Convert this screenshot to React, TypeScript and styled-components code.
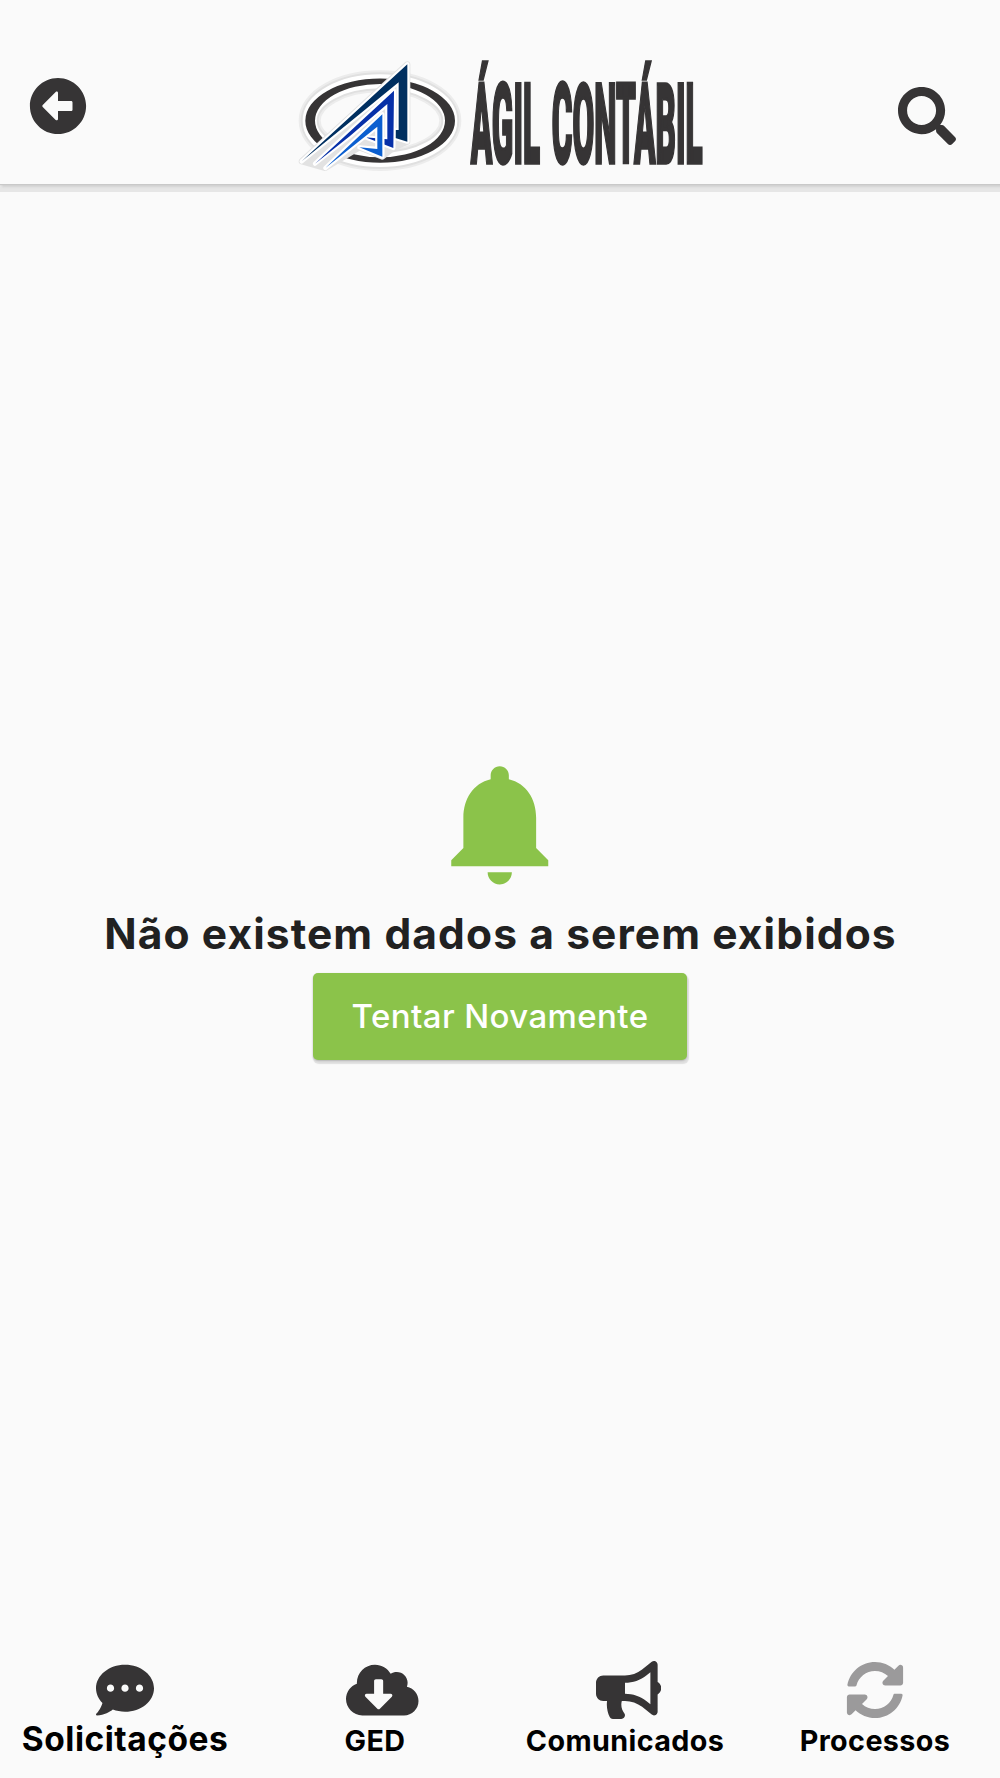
import React from "react";
import styled, { createGlobalStyle } from "styled-components";
import { FaArrowAltCircleLeft, FaSearch, FaCommentDots, FaCloudDownloadAlt, FaBullhorn, FaSyncAlt } from "react-icons/fa";

const GlobalStyle = createGlobalStyle`
  *, *::before, *::after { box-sizing: border-box; }
  body { margin: 0; background: #fafafa; font-family: Inter, "Liberation Sans", sans-serif; }
`;

const Screen = styled.div`
  display: flex;
  flex-direction: column;
  width: 1000px;
  height: 1778px;
  overflow: hidden;
  background: #fafafa;
`;

const Header = styled.header`
  display: flex;
  flex: none;
  align-items: flex-start;
  justify-content: space-between;
  height: 184px;
  padding: 30px 44px 0 29px;
  background: #fafafa;
  box-shadow: 0 1px 1px #c9c9c9, 2px 3px 2px #d2d2d2, 0 8px 0 #e6e6e6;
`;

const IconButton = styled.button<{ $top: number }>`
  display: flex;
  width: 58px;
  height: 58px;
  margin-top: ${(p) => p.$top}px;
  padding: 0;
  border: 0;
  background: none;
  color: #363435;
  font-size: 58px;
`;

const Logo = styled.svg`
  display: block;
  width: 420px;
  height: 167px;
  margin-left: 15px;
  overflow: visible;
  font-family: Roboto, "Liberation Sans", sans-serif;
  font-weight: 900;
`;

const Main = styled.main`
  display: flex;
  flex: 1;
  flex-direction: column;
  align-items: center;
  padding-top: 567px;
`;

const Bell = styled.svg`
  display: block;
  flex: none;
  width: 145.5px;
  height: 145.5px;
  fill: #8bc34a;
`;

const Message = styled.h1`
  margin: 12.5px 0 14px;
  padding-left: 1px;
  color: #212121;
  font-size: 42.5px;
  font-weight: 650;
  line-height: 50px;
  letter-spacing: 1.1px;
  white-space: nowrap;
`;

const RetryButton = styled.button`
  width: 374px;
  height: 87px;
  padding: 0 0 1px;
  border: 0;
  border-radius: 5px;
  background: #8bc34a;
  box-shadow: 0 1px 2px #b5b5b5, 1px 3px 1px 1px #e0e0e0;
  color: #fff;
  font-family: inherit;
  font-size: 33px;
  font-weight: 500;
  letter-spacing: 0.4px;
  white-space: nowrap;
`;

const NavBar = styled.nav`
  display: grid;
  flex: none;
  grid-template-columns: repeat(4, 250px);
  height: 117px;
`;

const NavItem = styled.a<{ $muted?: boolean }>`
  display: flex;
  flex-direction: column;
  align-items: center;
  color: ${(p) => (p.$muted ? "#9b9a9b" : "#363435")};
`;

const NavIcon = styled.span<{ $width: number }>`
  display: flex;
  width: 58px;
  height: 58px;
  overflow: visible;

  svg {
    flex: none;
    width: ${(p) => p.$width}px;
    height: 58px;
  }
`;

const NavLabel = styled.span<{ $large?: boolean }>`
  margin-top: ${(p) => (p.$large ? 0 : 2)}px;
  color: #000;
  font-size: ${(p) => (p.$large ? 33.5 : 28.7)}px;
  font-weight: 650;
  line-height: 40px;
  letter-spacing: ${(p) => (p.$large ? 0.5 : 0.4)}px;
  white-space: nowrap;
`;

const strokes = [
  { d: "M35 334 L352 43 V275 L316 264 V240 H326 V97 L180 216 Z", fill: "#002f60" },
  { d: "M75 341 L312 122 L310 294 L226 262 L292 268 V162 L180 258 Z", fill: "#0730a8" },
  { d: "M106 354 L277 193 V320 L208 292 L262 297 V230 Z", fill: "#0b5fd0" },
];

function BrandLogo() {
  return (
    <Logo viewBox="0 -60 1260 501" role="img" aria-label="Ágil Contábil">
      <g fill="none">
        <ellipse cx="270" cy="212" rx="211" ry="118" stroke="#ececec" strokeWidth="66" />
        <ellipse cx="270" cy="212" rx="211" ry="118" stroke="#e0e0e0" strokeWidth="54" />
        <ellipse cx="270" cy="212" rx="211" ry="118" stroke="#fff" strokeWidth="42" />
        <path fill="#363435" fillRule="evenodd" d="M46 212a224 126 0 1 0 449 0a224 126 0 1 0-449 0ZM75 212a195 110 0 1 1 390 0a195 110 0 1 1-390 0Z" />
      </g>
      <path d="M35 334L352 43V275L310 294L277 320L208 292L106 354Z" fill="#e2e2e2" stroke="#e2e2e2" strokeWidth="18" strokeLinejoin="round" />
      {strokes.map((s) => (
        <path key={s.fill} d={s.d} fill={s.fill} stroke="#fff" strokeWidth="13" strokeLinejoin="round" paintOrder="stroke" />
      ))}
      <g transform="translate(542 338) scale(0.2825 1)">
        <text
          fontSize="333"
          textLength="2464"
          wordSpacing="40"
          lengthAdjust="spacingAndGlyphs"
          fill="#363435"
          stroke="#363435"
          strokeWidth="2.5"
          vectorEffect="non-scaling-stroke"
        >
          ÁGIL CONTÁBIL
        </text>
      </g>
    </Logo>
  );
}

const items = [
  { label: "Solicitações", Icon: FaCommentDots, width: 58, large: true },
  { label: "GED", Icon: FaCloudDownloadAlt, width: 72.5 },
  { label: "Comunicados", Icon: FaBullhorn, width: 65.25 },
  { label: "Processos", Icon: FaSyncAlt, width: 58, muted: true },
];

export default function App() {
  return (
    <>
      <GlobalStyle />
      <Screen>
        <Header>
          <IconButton $top={47} aria-label="Voltar"><FaArrowAltCircleLeft /></IconButton>
          <BrandLogo />
          <IconButton $top={57} aria-label="Buscar"><FaSearch /></IconButton>
        </Header>
        <Main>
          <Bell viewBox="0 0 24 24">
            <path d="M12 22c1.1 0 2-.9 2-2h-4c0 1.1.89 2 2 2zm6-6v-5c0-3.07-1.64-5.64-4.5-6.32V4c0-.83-.67-1.5-1.5-1.5s-1.5.67-1.5 1.5v.68C7.63 5.36 6 7.92 6 11v5l-2 2v1h16v-1l-2-2z" />
          </Bell>
          <Message>Não existem dados a serem exibidos</Message>
          <RetryButton>Tentar Novamente</RetryButton>
        </Main>
        <NavBar>
          {items.map(({ label, Icon, width, large, muted }) => (
            <NavItem key={label} $muted={muted}>
              <NavIcon $width={width}><Icon /></NavIcon>
              <NavLabel $large={large}>{label}</NavLabel>
            </NavItem>
          ))}
        </NavBar>
      </Screen>
    </>
  );
}
